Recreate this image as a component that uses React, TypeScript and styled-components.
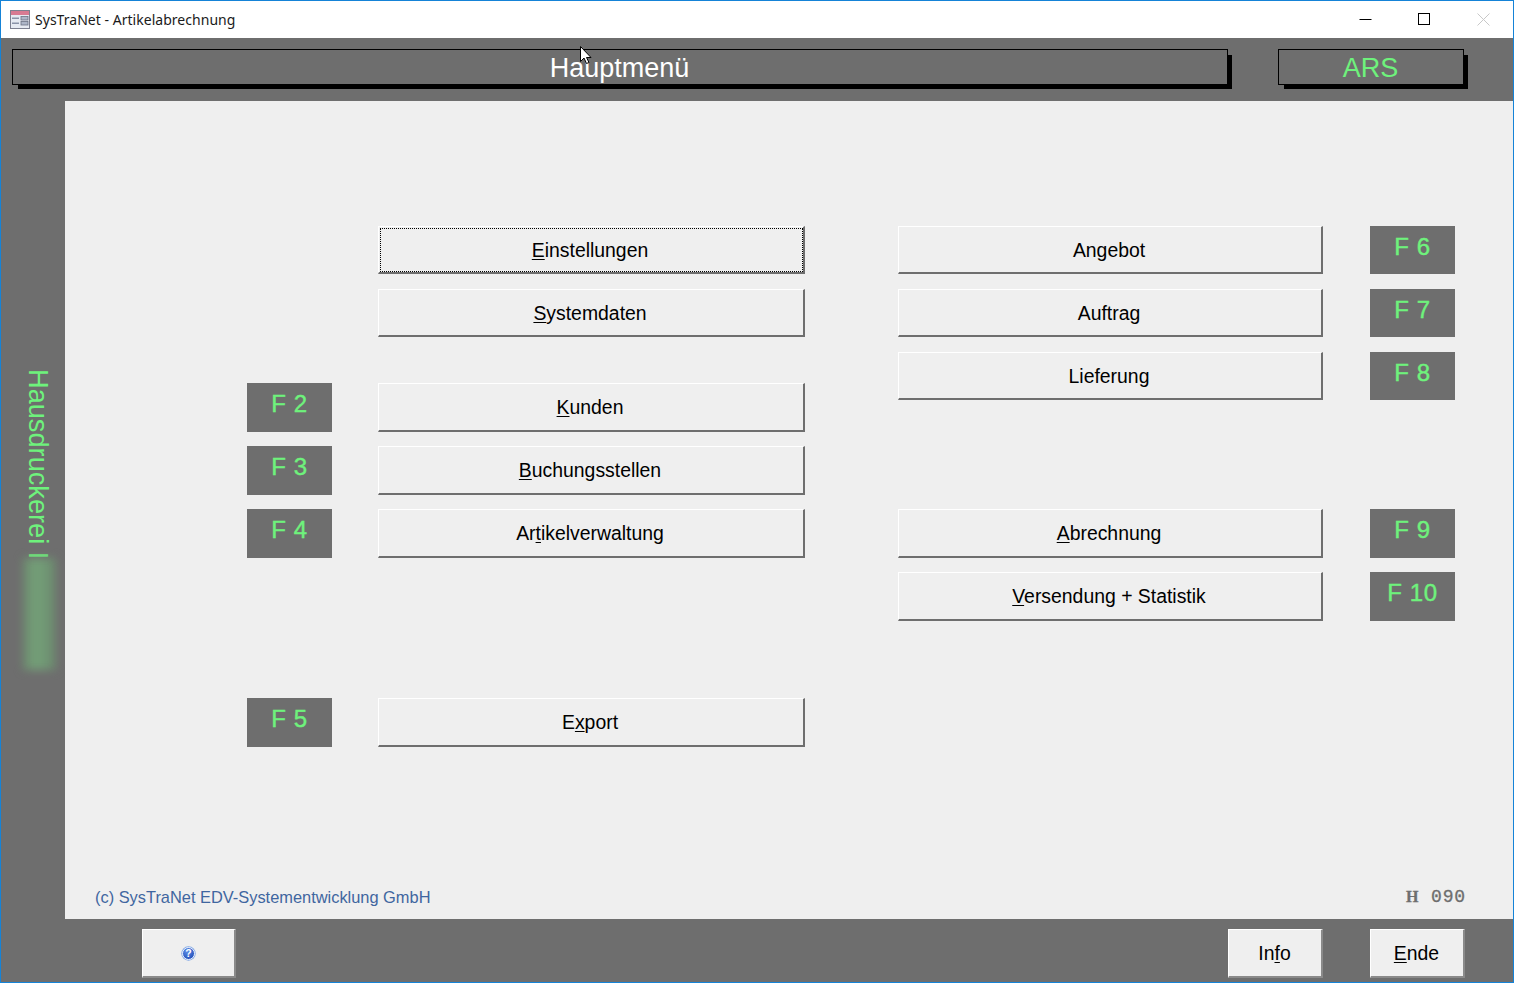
import React from "react";
import styled, { createGlobalStyle } from "styled-components";

const GRAY = "#6e6e6e";
const GREEN = "#6ef27c";
const PANEL = "#efefef";

const Global = createGlobalStyle`
  html, body { margin: 0; padding: 0; background: ${GRAY}; }
`;

const Win = styled.div`
  width: 1514px;
  height: 983px;
  box-sizing: border-box;
  border: 1px solid #1583d7;
  display: flex;
  flex-direction: column;
  position: relative;
  overflow: hidden;
  font-family: "Liberation Sans", Arial, sans-serif;
  background: ${GRAY};
`;

const TitleBar = styled.div`
  height: 37px;
  flex: none;
  background: #fff;
  display: flex;
  align-items: center;
  padding-left: 9px;
  box-sizing: border-box;
`;

const TitleText = styled.span`
  font-family: "Noto Sans", sans-serif;
  font-size: 14px;
  color: #1a1a1a;
  margin-left: 5px;
  letter-spacing: 0.03px;
`;

const WinControls = styled.div`
  margin-left: auto;
  display: flex;
  align-items: center;
  padding-right: 23px;
  gap: 46px;
`;

const HeaderRow = styled.div`
  height: 63px;
  flex: none;
  display: flex;
  align-items: flex-start;
  padding: 11px 0 0 11px;
  box-sizing: border-box;
`;

const HeaderBox = styled.div<{ $w: number; $color: string; $ml?: number }>`
  width: ${(p) => p.$w}px;
  height: 36px;
  margin-left: ${(p) => p.$ml ?? 0}px;
  padding: 1px 1px 0 0;
  box-sizing: border-box;
  border: 1px solid #000;
  box-shadow: 5px 5px 0 -1px #000;
  background: ${GRAY};
  color: ${(p) => p.$color};
  font-size: 27px;
  line-height: 35px;
  text-align: center;
`;

const Middle = styled.div`
  flex: 1;
  display: flex;
  min-height: 0;
`;

const Sidebar = styled.div`
  width: 64px;
  flex: none;
  position: relative;
  overflow: hidden;
  padding: 268px 0 0 19px;
  box-sizing: border-box;
`;

const SideText = styled.div`
  writing-mode: vertical-rl;
  color: ${GREEN};
  font-size: 27.2px;
  line-height: 36px;
  white-space: nowrap;
`;

const Redaction = styled.div`
  position: absolute;
  left: 22px;
  top: 457px;
  width: 33px;
  height: 112px;
  background: linear-gradient(90deg, #6d8a6f, #74a078 40%, #6f9473 75%, #6c846d);
  filter: blur(4px);
`;

const Panel = styled.div`
  flex: 1;
  background: ${PANEL};
  display: flex;
  flex-direction: column;
`;

const Menu = styled.div`
  flex: 1;
  display: flex;
  gap: 93px;
  padding: 125px 0 0 182px;
`;

const MenuCol = styled.div`
  display: flex;
  flex-direction: column;
`;

const Row = styled.div<{ $top: number; $h: number; $side: "left" | "right" }>`
  display: grid;
  grid-template-columns: ${(p) => (p.$side === "left" ? "85px 427px" : "425px 85px")};
  column-gap: ${(p) => (p.$side === "left" ? 46 : 47)}px;
  height: ${(p) => p.$h}px;
  margin-top: ${(p) => p.$top}px;
`;

const FKey = styled.div`
  background: ${GRAY};
  color: ${GREEN};
  font-size: 24px;
  line-height: 28px;
  letter-spacing: 0.6px;
  padding-top: 7px;
  text-align: center;
  box-sizing: border-box;
  -webkit-text-stroke: 0.4px ${GREEN};
`;

const MenuButton = styled.button<{ $focus?: boolean }>`
  position: relative;
  margin: 0;
  padding: 1px 2px 0 0;
  box-sizing: border-box;
  background: ${PANEL};
  border-style: solid;
  border-width: 1px 2px 2px 1px;
  border-color: #fff #6e6e6e #6e6e6e #fff;
  font-family: "Liberation Sans", Arial, sans-serif;
  font-size: 19.4px;
  color: #000;
  border-radius: 0;
  ${(p) => p.$focus && `outline: 1px dotted #000; outline-offset: -3px;`}
`;

const Mn = styled.span`
  text-decoration: underline;
  text-underline-offset: 2px;
`;

const Footer = styled.div`
  display: flex;
  justify-content: space-between;
  align-items: center;
  height: 20px;
  padding: 0 47px 12px 30px;
`;

const Copyright = styled.span`
  color: #3f66a0;
  font-size: 16.4px;
`;

const FormCode = styled.span`
  font-family: "Liberation Mono", monospace;
  color: ${GRAY};
  font-size: 18px;
  letter-spacing: 0.85px;
  white-space: pre;
  -webkit-text-stroke: 0.3px ${GRAY};
`;

const FormH = styled.b`
  font-weight: 700;
  font-family: "Liberation Serif", serif;
  font-size: 16px;
`;

const BottomBar = styled.div`
  height: 63px;
  flex: none;
  display: flex;
  align-items: flex-start;
  padding: 10px 48px 0 141px;
  box-sizing: border-box;
`;

const BarButton = styled.button<{ $w: number; $ml?: string }>`
  width: ${(p) => p.$w}px;
  height: 49px;
  margin: 0 0 0 ${(p) => p.$ml ?? "0"};
  padding: 1px 1px 0 0;
  box-sizing: border-box;
  background: ${PANEL};
  border-style: solid;
  border-width: 1px 2px 2px 1px;
  border-color: #fff #8a8a8a #8a8a8a #fff;
  font-family: "Liberation Sans", Arial, sans-serif;
  font-size: 19.4px;
  color: #000;
  display: flex;
  align-items: center;
  justify-content: center;
`;

const HelpSlot = styled.span`
  display: flex;
  margin-left: 1px;
`;

const Cursor = styled.svg`
  position: absolute;
  left: 578px;
  top: 44px;
`;

type Item = { key?: string; pre: string; mn?: string; post?: string; top: number; h: number; focus?: boolean };

const left: Item[] = [
  { pre: "", mn: "E", post: "instellungen", top: 0, h: 48, focus: true },
  { pre: "", mn: "S", post: "ystemdaten", top: 15, h: 48 },
  { key: "F 2", pre: "", mn: "K", post: "unden", top: 46, h: 49 },
  { key: "F 3", pre: "", mn: "B", post: "uchungsstellen", top: 14, h: 49 },
  { key: "F 4", pre: "Ar", mn: "t", post: "ikelverwaltung", top: 14, h: 49 },
  { key: "F 5", pre: "E", mn: "x", post: "port", top: 140, h: 49 },
];

const right: Item[] = [
  { key: "F 6", pre: "Angebot", top: 0, h: 48 },
  { key: "F 7", pre: "Auftrag", top: 15, h: 48 },
  { key: "F 8", pre: "Lieferung", top: 15, h: 48 },
  { key: "F 9", pre: "", mn: "A", post: "brechnung", top: 109, h: 49 },
  { key: "F 10", pre: "", mn: "V", post: "ersendung + Statistik", top: 14, h: 49 },
];

const Label = ({ it }: { it: Item }) => (
  <span>
    {it.pre}
    {it.mn && <Mn>{it.mn}</Mn>}
    {it.post}
  </span>
);

const FormIcon = () => (
  <svg width="20" height="20" viewBox="0 0 20 20">
    <rect x="0.5" y="0.5" width="19" height="18" fill="#e6eaf2" stroke="#7d8090" />
    <rect x="1" y="1" width="18" height="4" fill="#d87a92" />
    <rect x="2" y="7.5" width="7" height="1.5" fill="#8a93a8" />
    <rect x="11" y="6.5" width="7" height="3.5" fill="#aeb6c8" stroke="#6b7284" strokeWidth="0.8" />
    <rect x="2" y="12.5" width="7" height="1.5" fill="#8a93a8" />
    <rect x="11" y="11.5" width="7" height="3.5" fill="#aeb6c8" stroke="#6b7284" strokeWidth="0.8" />
  </svg>
);

const HelpIcon = () => (
  <svg width="15" height="15" viewBox="0 0 15 15">
    <defs>
      <radialGradient id="h" cx="0.4" cy="0.3" r="0.8">
        <stop offset="0" stopColor="#5f8fe8" />
        <stop offset="1" stopColor="#1b48b5" />
      </radialGradient>
    </defs>
    <circle cx="7.5" cy="7.5" r="7.2" fill="#7ea6e6" />
    <circle cx="7.5" cy="7.5" r="6" fill="url(#h)" stroke="#fff" strokeWidth="0.9" />
    <text x="7.5" y="11.2" textAnchor="middle" fontSize="10.5" fontWeight="700" fill="#fff" fontFamily="Liberation Sans, sans-serif">?</text>
  </svg>
);

export default function App() {
  return (
    <Win>
      <Global />
      <TitleBar>
        <FormIcon />
        <TitleText>SysTraNet - Artikelabrechnung</TitleText>
        <WinControls>
          <svg width="13" height="13" viewBox="0 0 13 13"><path d="M0.5 6.5H12.5" stroke="#000" fill="none" /></svg>
          <svg width="13" height="13" viewBox="0 0 13 13"><rect x="0.5" y="0.5" width="11" height="11" stroke="#000" fill="none" /></svg>
          <svg width="13" height="13" viewBox="0 0 13 13"><path d="M0.5 0.5L12.5 12.5M12.5 0.5L0.5 12.5" stroke="#c8c8c8" fill="none" /></svg>
        </WinControls>
      </TitleBar>
      <HeaderRow>
        <HeaderBox $w={1216} $color="#fff">Hauptmenü</HeaderBox>
        <HeaderBox $w={186} $ml={50} $color={GREEN}>ARS</HeaderBox>
      </HeaderRow>
      <Middle>
        <Sidebar>
          <SideText>Hausdruckerei I</SideText>
          <Redaction />
        </Sidebar>
        <Panel>
          <Menu>
            <MenuCol>
              {left.map((it) => (
                <Row key={it.pre + it.post} $top={it.top} $h={it.h} $side="left">
                  {it.key ? <FKey>{it.key}</FKey> : <span />}
                  <MenuButton $focus={it.focus}><Label it={it} /></MenuButton>
                </Row>
              ))}
            </MenuCol>
            <MenuCol>
              {right.map((it) => (
                <Row key={it.pre + it.post} $top={it.top} $h={it.h} $side="right">
                  <MenuButton><Label it={it} /></MenuButton>
                  <FKey>{it.key}</FKey>
                </Row>
              ))}
            </MenuCol>
          </Menu>
          <Footer>
            <Copyright>(c) SysTraNet EDV-Systementwicklung GmbH</Copyright>
            <FormCode><FormH>H</FormH> 090</FormCode>
          </Footer>
        </Panel>
      </Middle>
      <BottomBar>
        <BarButton $w={94}><HelpSlot><HelpIcon /></HelpSlot></BarButton>
        <BarButton $w={95} $ml="auto">
          <span>In<Mn>f</Mn>o</span>
        </BarButton>
        <BarButton $w={95} $ml="47px">
          <span><Mn>E</Mn>nde</span>
        </BarButton>
      </BottomBar>
      <Cursor width="14" height="20" viewBox="0 0 14 20">
        <path d="M1.5 1.5V16.5L5 13L7.5 18.5L10 17.5L7.5 12.5H12Z" fill="#fff" stroke="#000" strokeWidth="1" />
      </Cursor>
    </Win>
  );
}
